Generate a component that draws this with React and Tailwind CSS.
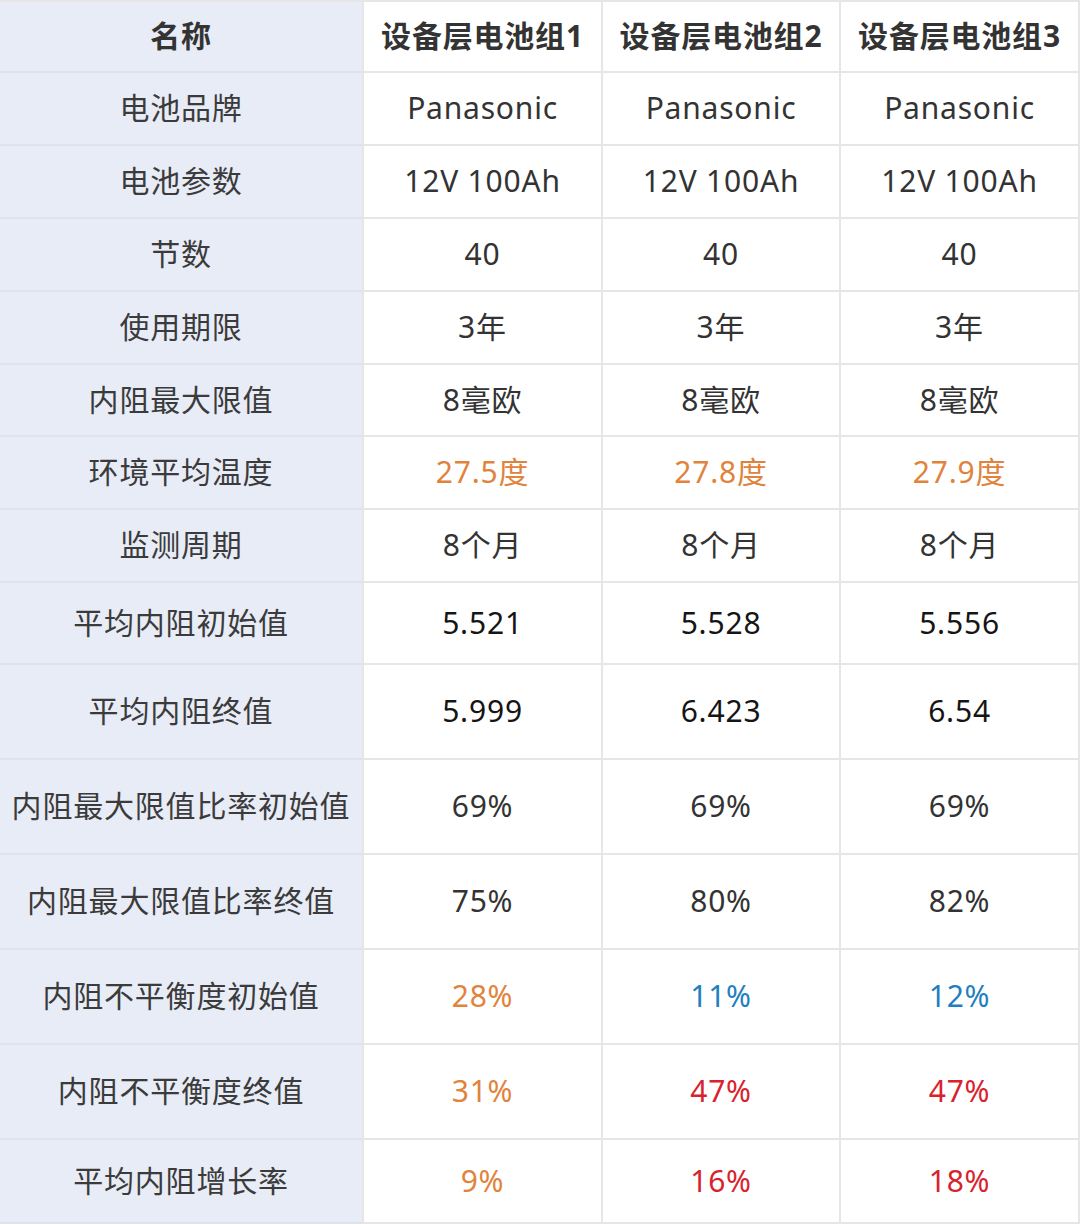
import React from 'react'

const O = 'text-[#e0833c]'
const B = 'text-[#1f7fc0]'
const R = 'text-[#d8232e]'
const K = 'text-[#151515]'

const rows = [
  { name: '电池品牌', h: 'h-[73px]', v: ['Panasonic', 'Panasonic', 'Panasonic'] },
  { name: '电池参数', h: 'h-[73px]', v: ['12V 100Ah', '12V 100Ah', '12V 100Ah'] },
  { name: '节数', h: 'h-[73px]', v: ['40', '40', '40'] },
  { name: '使用期限', h: 'h-[73px]', v: ['3年', '3年', '3年'] },
  { name: '内阻最大限值', h: 'h-[72px]', v: ['8毫欧', '8毫欧', '8毫欧'] },
  { name: '环境平均温度', h: 'h-[73px]', v: ['27.5度', '27.8度', '27.9度'], c: [O, O, O] },
  { name: '监测周期', h: 'h-[73px]', v: ['8个月', '8个月', '8个月'] },
  { name: '平均内阻初始值', h: 'h-[82px]', v: ['5.521', '5.528', '5.556'], c: [K, K, K] },
  { name: '平均内阻终值', h: 'h-[95px]', v: ['5.999', '6.423', '6.54'], c: [K, K, K] },
  { name: '内阻最大限值比率初始值', h: 'h-[95px]', v: ['69%', '69%', '69%'] },
  { name: '内阻最大限值比率终值', h: 'h-[95px]', v: ['75%', '80%', '82%'] },
  { name: '内阻不平衡度初始值', h: 'h-[95px]', v: ['28%', '11%', '12%'], c: [O, B, B] },
  { name: '内阻不平衡度终值', h: 'h-[95px]', v: ['31%', '47%', '47%'], c: [O, R, R] },
  { name: '平均内阻增长率', h: 'h-[84px]', v: ['9%', '16%', '18%'], c: [O, R, R] },
]

const widths = ['w-[239px]', 'w-[238px]', 'w-[239px]']

function Row({ name, h, v, c, head }) {
  const weight = head ? 'font-bold text-[#333]' : 'text-[#3b3b3b]'
  return (
    <div className={`flex ${h}`}>
      <div className={`w-[362px] shrink-0 flex items-center justify-center pb-[2px] bg-[#e8ecf7] border-b-2 border-[#dee3ef] ${weight}`}>
        {name}
      </div>
      {v.map((x, i) => (
        <div
          key={i}
          className={`${widths[i]} shrink-0 flex items-center justify-center pb-[2px] border-l-2 border-b-2 border-[#e6e6e6] bg-white ${head ? weight : (c ? c[i] : 'text-[#333]')}`}
        >
          {x}
        </div>
      ))}
    </div>
  )
}

export default function App() {
  return (
    <div className="w-[1080px] h-[1225px] bg-white font-['Noto_Sans','Noto_Sans_CJK_SC',sans-serif] text-[30px] tracking-[0.8px]">
      <div className="w-[1080px] border-t-2 border-r-2 border-[#e6e6e6]">
        <Row head name="名称" h="h-[71px]" v={['设备层电池组1', '设备层电池组2', '设备层电池组3']} />
        {rows.map(r => (
          <Row key={r.name} {...r} />
        ))}
      </div>
    </div>
  )
}
